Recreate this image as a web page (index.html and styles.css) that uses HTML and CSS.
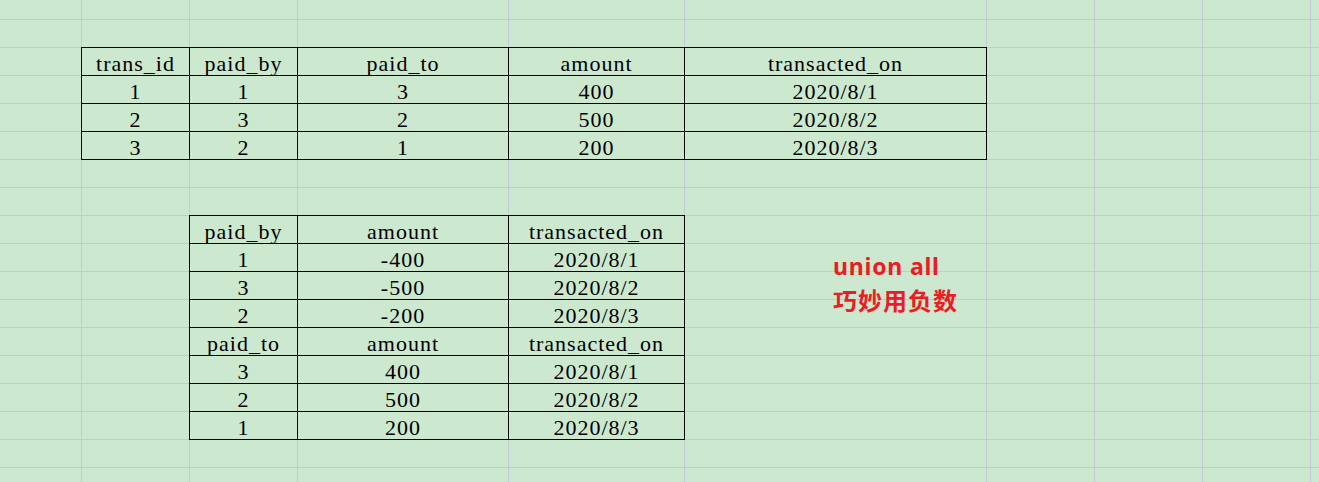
FILE: index.html
```html
<!DOCTYPE html>
<html lang="zh-CN">
<head>
<meta charset="utf-8">
<title>union all</title>
<link rel="stylesheet" href="styles.css">
</head>
<body>
<div class="sheet">
  <div class="tbl tbl-main">
    <div class="c">trans_id</div><div class="c">paid_by</div><div class="c">paid_to</div><div class="c">amount</div><div class="c">transacted_on</div>
    <div class="c">1</div><div class="c">1</div><div class="c">3</div><div class="c">400</div><div class="c">2020/8/1</div>
    <div class="c">2</div><div class="c">3</div><div class="c">2</div><div class="c">500</div><div class="c">2020/8/2</div>
    <div class="c">3</div><div class="c">2</div><div class="c">1</div><div class="c">200</div><div class="c">2020/8/3</div>
  </div>

  <div class="tbl tbl-union">
    <div class="c">paid_by</div><div class="c">amount</div><div class="c">transacted_on</div>
    <div class="c">1</div><div class="c">-400</div><div class="c">2020/8/1</div>
    <div class="c">3</div><div class="c">-500</div><div class="c">2020/8/2</div>
    <div class="c">2</div><div class="c">-200</div><div class="c">2020/8/3</div>
    <div class="c">paid_to</div><div class="c">amount</div><div class="c">transacted_on</div>
    <div class="c">3</div><div class="c">400</div><div class="c">2020/8/1</div>
    <div class="c">2</div><div class="c">500</div><div class="c">2020/8/2</div>
    <div class="c">1</div><div class="c">200</div><div class="c">2020/8/3</div>
  </div>

  <div class="note">
    <p class="note-en">union all</p>
    <p class="note-zh">巧妙用负数</p>
  </div>
</div>
</body>
</html>
```

FILE: styles.css
```css
html, body {
  margin: 0;
  padding: 0;
  background: #cce8cf;
}

.sheet {
  --line: #c5c8d9;
  width: 1319px;
  height: 482px;
  overflow: hidden;
  display: grid;
  grid-template-columns: 82px 108px 108px 211px 176px 302px 108px 108px 108px 1fr;
  grid-template-rows: 20px repeat(17, 28px);
  background-color: #cce8cf;
  background-image:
    linear-gradient(to right,
      transparent 0 81px, var(--line) 81px 82px,
      transparent 82px 189px, var(--line) 189px 190px,
      transparent 190px 297px, var(--line) 297px 298px,
      transparent 298px 508px, var(--line) 508px 509px,
      transparent 509px 684px, var(--line) 684px 685px,
      transparent 685px 986px, var(--line) 986px 987px,
      transparent 987px 1094px, var(--line) 1094px 1095px,
      transparent 1095px 1202px, var(--line) 1202px 1203px,
      transparent 1203px 1310px, var(--line) 1310px 1311px,
      transparent 1311px),
    repeating-linear-gradient(to bottom,
      transparent 0 19px, var(--line) 19px 20px, transparent 20px 28px);
}

.tbl {
  display: grid;
  grid-auto-rows: 27px;
  gap: 1px;
  padding: 1px;
  margin: -1px 0 0 -1px;
  background: #000;
}

.tbl-main {
  grid-column: 2 / 7;
  grid-row: 3 / 7;
  grid-template-columns: 107px 107px 210px 175px 301px;
}

.tbl-union {
  grid-column: 3 / 6;
  grid-row: 9 / 17;
  grid-template-columns: 107px 210px 175px;
}

.c {
  background: #cce8cf;
  color: #000;
  font-family: "Liberation Serif", "DejaVu Serif", serif;
  font-size: 22px;
  letter-spacing: 1px;
  line-height: 21px;
  padding-top: 5px;
  text-align: center;
  white-space: nowrap;
}

.note {
  grid-column: 6 / 7;
  grid-row: 10 / 13;
  padding: 7px 0 0 148px;
  color: #ec1c24;
  font-weight: bold;
}

.note p {
  margin: 0;
  white-space: nowrap;
}

.note-en {
  font-family: "Noto Sans", "Noto Sans CJK SC", sans-serif;
  font-size: 23px;
  line-height: 31px;
  letter-spacing: 0.8px;
}

.note-zh {
  font-family: "Noto Sans CJK SC", "Noto Sans", sans-serif;
  font-size: 24px;
  line-height: 35px;
  letter-spacing: 1px;
}
```
